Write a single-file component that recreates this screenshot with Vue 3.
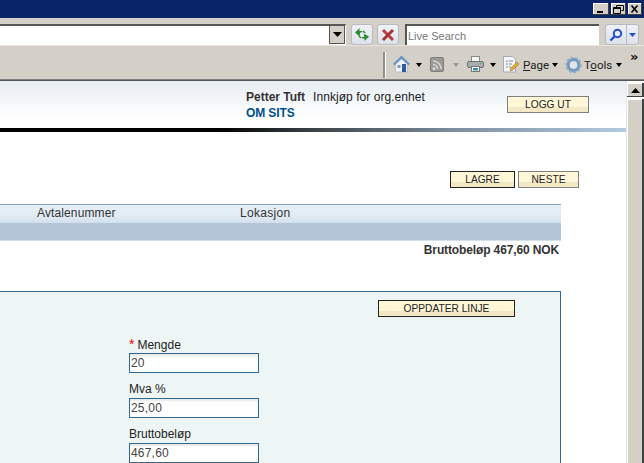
<script setup>
const fields = [
  { label: 'Mengde', value: '20', required: true },
  { label: 'Mva %', value: '25,00' },
  { label: 'Bruttobeløp', value: '467,60' }
]
</script>

<template>
  <div class="window">
    <div class="titlebar">
      <button class="wbtn min"><svg width="16" height="12"><rect x="4" y="8" width="6" height="2" fill="#000"/></svg></button>
      <button class="wbtn max"><svg width="15" height="12"><path d="M5.5 2.5h7v5h-2M5.5 2.5v2M2.5 4.500h7v6h-7z M2.500 5.500h7" fill="none" stroke="#000"/></svg></button>
      <button class="wbtn close"><svg width="14" height="12"><path d="M3.500 2.500l6 7M9.500 2.500l-6 7" fill="none" stroke="#000" stroke-width="1.600"/></svg></button>
    </div>

    <div class="addressbar">
      <div class="address">
        <div class="field"></div>
        <div class="drop"><svg width="9" height="5"><path d="M0 0h9L4.500 5z" fill="#000"/></svg></div>
      </div>
      <div class="tbtn go">
        <svg width="18" height="18" viewBox="0 0 18 18"><path d="M2 6.500L6.500 2v3H9v1.500H7V8L6.500 10.500z" fill="#2f8a2f"/><path d="M16 10.500L11.500 15v-2.500H9V11h2V8.500l.5-.5z" fill="#2f8a2f"/><path d="M10 5l2 2M8 12l-2-2" stroke="#2f8a2f" stroke-width="1.500"/></svg>
      </div>
      <div class="tbtn stop">
        <svg width="14" height="14" viewBox="0 0 14 14"><path d="M2 2l10 10" stroke="#b8403f" stroke-width="3"/><path d="M12 2L2 12" stroke="#a83432" stroke-width="3"/></svg>
      </div>
      <div class="search">Live Search</div>
      <div class="searchgo">
        <div class="sg-main">
          <svg width="14" height="14" viewBox="0 0 14 14"><circle cx="8.500" cy="5.500" r="3.700" fill="#e8f0ff" stroke="#1f4fd0" stroke-width="2"/><path d="M5.500 8.500L1.500 12.500" stroke="#1f4fd0" stroke-width="2.400"/></svg>
        </div>
        <div class="sg-arrow"><svg width="7" height="4"><path d="M0 0h7L3.500 4z" fill="#1f4fd0"/></svg></div>
      </div>
    </div>

    <div class="toolbar">
      <div class="sep"></div>
      <svg class="i-home" width="17" height="18" viewBox="0 0 17 18">
        <path d="M8.500 1L0.500 9l1.500 1L8.500 3.500 15 10l1.500-1z" fill="#5f9bd5" stroke="#3f6fa5" stroke-width=".5"/>
        <path d="M2.500 9.500L8.500 4l6 5.500V17h-12z" fill="#f4f3f8" stroke="#a0a8b8" stroke-width=".6"/>
        <rect x="4.500" y="10" width="3" height="3" fill="#6d9ccc"/>
        <rect x="9" y="9" width="4" height="8" fill="#2d5c9a"/>
      </svg>
      <span class="arrow a1"></span>
      <svg class="i-rss" width="14" height="15" viewBox="0 0 14 15">
        <rect x=".5" y=".5" width="13" height="14" rx="1.500" fill="#9a9a98" stroke="#7d7d7b"/>
        <circle cx="4" cy="11.500" r="1.500" fill="#d8d8d6"/>
        <path d="M3 7.500a4.500 4.500 0 0 1 4.500 4.500M3 4a8 8 0 0 1 8 8" fill="none" stroke="#d8d8d6" stroke-width="1.500"/>
      </svg>
      <span class="arrow a2 muted"></span>
      <svg class="i-print" width="17" height="16" viewBox="0 0 17 16">
        <rect x="4.500" y=".5" width="8" height="6" fill="#f4f4f4" stroke="#8a8a8a"/>
        <rect x=".5" y="5.500" width="16" height="6" rx="1.500" fill="#a9adb2" stroke="#6d7075"/>
        <rect x="4.500" y="10.500" width="8" height="5" fill="#fff" stroke="#777"/>
        <rect x="6" y="12" width="5" height="2.500" fill="#3a8fb0"/>
        <rect x="13" y="7" width="2" height="1" fill="#4fc04f"/>
      </svg>
      <span class="arrow a3"></span>
      <svg class="i-page" width="17" height="19" viewBox="0 0 17 19">
        <path d="M1.500 1.500h9l3 3V17h-12z" fill="#f5f5f8" stroke="#a5a8b5"/>
        <path d="M4 6h2M7 6h4M4 9h2M7 9h3M4 12h2M7 12h2" stroke="#7d8496"/>
        <path d="M8 16l1-3 6-6 2 2-6 6z" fill="#e5a838" stroke="#8a6a20" stroke-width=".5"/>
      </svg>
      <span class="tlabel l-page"><u>P</u>age</span>
      <span class="arrow a4"></span>
      <svg class="i-gear" width="17" height="18" viewBox="0 0 17 18">
        <circle cx="8.500" cy="9" r="5.500" fill="none" stroke="#6f97bd" stroke-width="3"/>
        <circle cx="8.500" cy="9" r="7" fill="none" stroke="#8aaccb" stroke-width="2.400" stroke-dasharray="2.400 1.900"/>
        <circle cx="8.500" cy="9" r="3.500" fill="#dfe6ec"/>
      </svg>
      <span class="tlabel l-tools">T<u>o</u>ols</span>
      <span class="arrow a5"></span>
      <span class="more">»</span>
    </div>

    <div class="viewport">
      <main class="page">
        <header class="head">
          <div class="user">
            <div><b class="name">Petter Tuft</b><span class="role">Innkjøp for org.enhet</span></div>
            <a class="about">OM SITS</a>
          </div>
          <button class="btn logout">LOGG UT</button>
        </header>
        <div class="rule"></div>

        <div class="actions">
          <button class="btn save">LAGRE</button>
          <button class="btn next">NESTE</button>
        </div>

        <div class="thead">
          <span class="c1">Avtalenummer</span>
          <span class="c2">Lokasjon</span>
        </div>
        <div class="tband"></div>
        <div class="total">Bruttobeløp 467,60 NOK</div>

        <section class="panel">
          <div class="panelbar">
            <button class="btn update">OPPDATER LINJE</button>
          </div>
          <div class="form">
            <div v-for="f in fields" :key="f.label" class="row">
              <label><span v-if="f.required" class="req">*</span>{{ f.label }}</label>
              <input class="inp" :value="f.value" readonly />
            </div>
          </div>
        </section>
      </main>

      <aside class="scroll">
        <div class="sbtn"><svg width="9" height="5"><path d="M4.500 0L9 5H0z" fill="#000"/></svg></div>
        <div class="thumb"></div>
      </aside>
    </div>
  </div>
</template>

<style>
html, body { margin: 0; overflow: hidden; }
</style>

<style scoped>
.window {
  width: 644px; height: 463px; overflow: hidden; background: #d4d0c8;
  font-family: "Liberation Sans", Arial, sans-serif; font-size: 12px; color: #222;
  display: flex; flex-direction: column;
}
.titlebar {
  height: 18px; background: #0a246a; display: flex; align-items: flex-start;
  padding: 3px 2px 0 0; box-sizing: border-box; justify-content: flex-end;
}
.wbtn {
  height: 12px; padding: 0; background: #d4d0c8; border: 0; display: block;
  box-shadow: inset -1px -1px #404040, inset 1px 1px #fff;
}
.wbtn svg { display: block; }
.min { width: 16px; margin-right: 2px; }
.max { width: 15px; margin-right: 2px; }
.close { width: 14px; }

.addressbar { height: 28px; display: flex; align-items: flex-start; padding-top: 6px; box-sizing: border-box; border-bottom: 1px solid #e8e5df; }
.address {
  width: 346px; height: 21px; box-sizing: border-box; background: #fff;
  border-top: 2px solid #555; border-right: 1px solid #fff; display: flex; justify-content: flex-end;
  box-shadow: 0 1px #e8e5df;
}
.drop {
  width: 16px; height: 18px; background: #d4d0c8; box-sizing: border-box;
  border-left: 1px solid #555; border-right: 1px solid #555; border-bottom: 1px solid #555;
  display: flex; align-items: center; justify-content: center;
}
.tbtn {
  width: 22px; height: 21px; box-sizing: border-box; border: 1px solid #b9b9c0; border-radius: 3px;
  background: linear-gradient(#f0f2f6, #dde1ea); display: flex; align-items: center; justify-content: center;
}
.go { margin-left: 5px; }
.stop { margin-left: 4px; }
.search {
  width: 194px; height: 21px; margin-left: 6px; box-sizing: border-box; background: #fff;
  border-top: 2px solid #555; border-left: 2px solid #555; padding-left: 1px;
  font-size: 11px; line-height: 20px; color: #777;
}
.searchgo {
  margin-left: 6px; width: 34px; height: 21px; box-sizing: border-box; border: 1px solid #b9b9c0;
  border-radius: 3px; display: flex; background: linear-gradient(#eef1f8, #dde1ea);
}
.sg-main { width: 20px; display: flex; align-items: center; justify-content: center; border-right: 1px solid #b9b9c0; }
.sg-arrow { flex: 1; display: flex; align-items: center; justify-content: center; }

.toolbar {
  height: 34px; box-sizing: border-box; display: flex; align-items: center; padding: 4px 0 0 383px;
  border-bottom: 1px solid #808080;
}
.sep { width: 2px; height: 26px; background: #8f8f8c; border-right: 1px solid #fff; margin-right: 7px; }
.arrow { width: 0; height: 0; border: 3.500px solid transparent; border-top: 4px solid #000; border-bottom: 0; flex: none; }
.arrow.muted { border-top-color: #999; }
.i-home { margin-top: -2px; }
.a1 { margin-left: 6px; }
.i-rss { margin-left: 8px; margin-top: -1px; }
.a2 { margin-left: 9px; }
.i-print { margin-left: 8px; margin-top: -1px; }
.a3 { margin-left: 6px; }
.i-page { margin-left: 6px; margin-top: -1px; }
.tlabel { font-family: "Roboto", sans-serif; font-size: 11.500px; color: #222; }
.l-page { margin-left: 4px; width: 24px; }
.a4 { margin-left: 5px; }
.i-gear { margin-left: 7px; }
.l-tools { margin-left: 2px; width: 25px; }
.a5 { margin-left: 7px; }
.more { margin-left: 8px; margin-top: -17px; font: bold 13px/13px "DejaVu Sans", sans-serif; color: #111; }

.viewport { flex: 1; display: flex; background: #fff; min-height: 0; border-top: 1px solid #555; }
.page { width: 626px; flex: none; background: #fff; }
.head {
  height: 47px; box-sizing: border-box; background: linear-gradient(#e7edf3, #fff 80%);
  display: flex; align-items: flex-start; padding: 8px 0 0 246px;
}
.user { line-height: 16px; width: 261px; }
.name { color: #333; }
.role { margin-left: 8px; color: #222; letter-spacing: .05px; }
.about { font-weight: bold; color: #00508f; display: block; letter-spacing: -.1px; }
.rule { height: 4px; background: linear-gradient(90deg, #000 35%, #3c4346 50%, #7c8c9c 72%, #b3cbe3 100%); }
.btn {
  display: block; height: 17px; padding: 0; box-sizing: border-box; font: 10.200px/14px "Liberation Sans", Arial, sans-serif;
  color: #222; text-align: center; border: 1px solid #808080;
  background: linear-gradient(#fff7d8 0, #fff7d8 62%, #f3e8c4 70%, #f3e8c4 100%);
}
.logout { width: 82px; margin-top: 7px; }
.actions { display: flex; justify-content: flex-end; gap: 3px; padding: 39px 47px 0 0; }
.save { width: 65px; border-color: #222; }
.next { width: 61px; }
.thead {
  margin-top: 16px; width: 561px; height: 19px; box-sizing: border-box; border-top: 1px solid #7fa6c6;
  background: linear-gradient(#e6eff7, #e2ecf5 55%, #d3e0ea);
  display: flex; line-height: 17px; color: #333;
}
.c1 { margin-left: 37px; width: 203px; letter-spacing: .12px; }
.c2 { letter-spacing: .3px; }
.tband { width: 561px; height: 18px; box-sizing: border-box; background: #b3c5d6; border-bottom: 1px solid #d4dfec; }
.total { width: 559px; text-align: right; font-weight: bold; line-height: 15px; margin-top: 2px; color: #333; letter-spacing: -.13px; }
.panel {
  margin-top: 33px; width: 561px; height: 240px; box-sizing: border-box;
  border-top: 1px solid #2f6a94; border-right: 1px solid #2f6a94; background: #eef6f5;
}
.panelbar { display: flex; justify-content: flex-end; padding: 8px 45px 0 0; }
.update { width: 137px; border-color: #222; }
.form { padding: 20px 0 0 129px; }
.row { height: 45px; }
.row label { display: block; line-height: 14px; height: 16px; color: #222; }
.req { color: #e00; margin-right: 3px; font-size: 14px; }
.inp {
  display: block; width: 130px; height: 20px; box-sizing: border-box; border: 1px solid #2f6a94;
  padding: 0 1px; margin: 0; outline: 0; font: 12px "Liberation Sans", Arial, sans-serif; color: #444;
  letter-spacing: .2px; box-shadow: inset 0 2px 2px #e8e8e8; background: #fff;
}
.scroll { flex: 1; box-sizing: border-box; padding-top: 2px; border-left: 1px solid #e6e6e6; }
.sbtn {
  height: 14px; background: #d4d0c8; box-shadow: inset -2px -1px #404040, inset 1px 1px #fff;
  display: flex; align-items: center; justify-content: center; padding-right: 1px; box-sizing: border-box;
}
.thumb { margin-top: 2px; height: 380px; background: #d4d0c8; box-shadow: inset -2px 0 #404040, inset 1px 1px #fff; }
</style>
